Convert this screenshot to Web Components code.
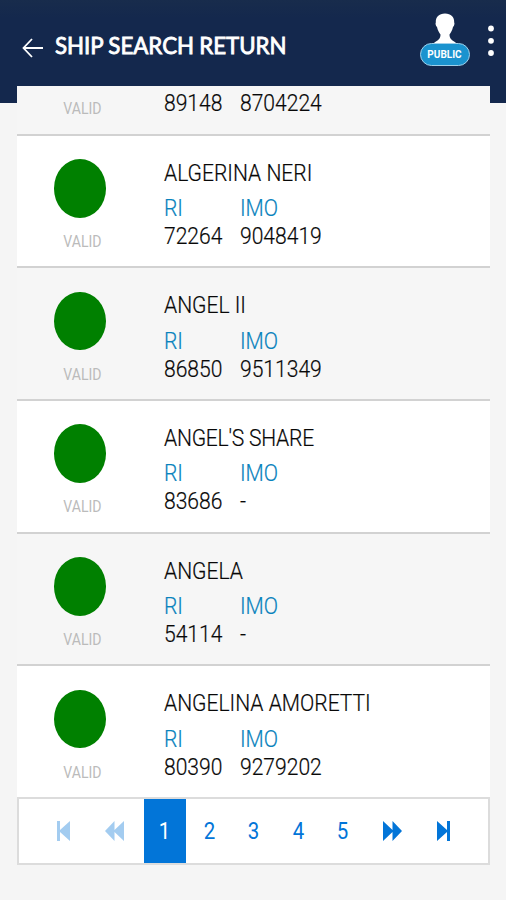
<!DOCTYPE html>
<html lang="en"><head><meta charset="utf-8"><title>Ship search return</title>
<style>html,body{margin:0;height:100%;background:#f5f5f5}body{overflow:hidden;font-family:Roboto,"Liberation Sans",sans-serif}</style></head>
<body>
<ship-app></ship-app>
<script>
const define=(name,html,setup)=>customElements.define(name,class extends HTMLElement{
  constructor(){super();this.attachShadow({mode:'open'}).innerHTML=html}
  connectedCallback(){if(setup)setup(this,this.shadowRoot)}
});

define('user-badge',`<style>
:host{display:flex;flex-direction:column;align-items:center;width:50px}
svg{display:block;width:42px;height:32px}
span{box-sizing:border-box;width:50px;height:23.500px;border:1.5px solid #9fd0ea;border-radius:12px;background:#1b93cf;color:#fff;font:700 10px/21px Roboto,sans-serif;text-align:center;margin-top:-2.500px;z-index:1}
</style><svg viewBox="0 0 42 32"><path fill="#fff" d="M21 .5C15 .5 11.500 4 11.800 9.500C11.200 10 11.600 13 13 14C13.700 17.500 15.500 20 16.500 21.500C16.500 25.500 14.500 27 10.500 29.500L8 32H34L31.500 29.500C27.500 27 25.500 25.500 25.500 21.500C26.500 20 28.300 17.500 29 14C30.400 13 30.800 10 30.200 9.500C30.500 4 27 .5 21 .5Z"/></svg><span><slot></slot></span>`);

define('app-bar',`<style>
:host{display:flex;box-sizing:border-box;height:102.500px;background:linear-gradient(#182c4c 0,#14284d 18px);padding:13px 11px 0 22px;color:#fff}
.back{width:21px;height:20px;margin-top:24.500px}
h1{margin:18px 0 0 12px;font:400 23.300px/29px Lato,sans-serif;-webkit-text-stroke:.85px #fff;word-spacing:-.5px;white-space:nowrap;transform-origin:0 50%;transform:scaleX(.956);flex:1}
.more{width:8px;height:34px;margin:10.500px 0 0 17.500px;display:block;padding:0}
</style><svg class="back" viewBox="0 0 21 20" fill="none" stroke="#fff" stroke-width="1.800"><path d="M10 1L1.500 10L10 19M1.500 10H21"/></svg><h1><slot></slot></h1><slot name="end"></slot><svg class="more" viewBox="0 0 8 34" fill="#fff"><circle cx="4" cy="4.500" r="2.900"/><circle cx="4" cy="16.800" r="2.900"/><circle cx="4" cy="29" r="2.900"/></svg>`);

define('ship-row',`<style>
:host{display:flex;box-sizing:border-box;height:132.700px;border-bottom:2px solid #d2d2d2;background:var(--row,#fff)}
.status{width:131px;display:flex;flex-direction:column;align-items:center;padding-top:23.500px;box-sizing:border-box}
i{width:52px;height:58.500px;border-radius:50%;background:#008000;position:relative;left:-3px}
.t{display:inline-block;white-space:nowrap;transform:scaleX(.89)}
.status .t{color:#bbb;font-size:15.800px;line-height:20px;font-weight:400;margin-top:14.500px}
.info{padding:22px 0 0 15.600px;font-weight:300;font-size:23.400px;color:#080808;-webkit-text-stroke:.2px currentColor}
.info .t{transform-origin:0 50%;line-height:30px}
.name{height:35.500px}
.name .t{transform:scaleX(.9)}
.grid{display:grid;grid-template-columns:76.200px 120px;grid-template-rows:28px 30px}
.grid .t{transform:scaleX(.9)}
.label{color:#0a83bd}
:host([tight]) .name{letter-spacing:-.25px}
:host([partial]){height:49.500px}
:host([partial]) .name{display:none}
:host([partial]) i{display:none}
:host([partial]) .status{padding-top:0}
:host([partial]) .status .t{margin-top:12.500px}
:host([partial]) .info{padding-top:1.500px}
</style><div class="status"><i></i><span class="t">VALID</span></div><div class="info"><div class="name"><span class="t"><slot></slot></span></div><div class="grid"></div></div>`,(el,r)=>{
  const cell=(c,s)=>`<span class="t ${c}">${s}</span>`;
  r.querySelector('.grid').innerHTML=(el.hasAttribute('partial')?'':cell('label','RI')+cell('label','IMO'))+cell('',el.getAttribute('ri'))+cell('',el.getAttribute('imo'));
});

define('page-button',`<style>
:host{display:flex;align-items:center;justify-content:center;width:44.500px;color:#0275d8;font-size:23px}
:host([active]){background:#0275d8;color:#fff;width:42px;margin-right:1px}
:host([disabled]){opacity:.36}
.n{transform:scaleX(.89)}svg{display:block;height:20px}
</style><div class="w"></div>`,(el,r)=>{
  const icons={
    first:[13,'M0 0H3V9L13 0V20L3 11V20H0Z'],
    prev:[19,'M0 10L9.500 0V9L19 0V20L9.500 11V20Z'],
    next:[19,'M19 10L9.500 0V9L0 0V20L9.500 11V20Z'],
    last:[13,'M13 0H10V9L0 0V20L10 11V20H13Z']};
  const k=el.getAttribute('icon');
  r.querySelector('.w').innerHTML=k?`<svg width="${icons[k][0]}" viewBox="0 0 ${icons[k][0]} 20" fill="currentColor"><path d="${icons[k][1]}"/></svg>`:'<div class="n"><slot></slot></div>';
});

define('page-nav',`<style>
:host{display:flex;box-sizing:border-box;height:68px;border:2px solid #dcdcdc;background:#fff;padding-left:22.500px}
.a{width:43px}.b{width:59px}.c{width:55px}.d{width:47px}
</style><page-button class="a" icon="first" disabled></page-button><page-button class="b" icon="prev" disabled></page-button><page-button active>1</page-button><page-button>2</page-button><page-button>3</page-button><page-button>4</page-button><page-button>5</page-button><page-button class="c" icon="next"></page-button><page-button class="d" icon="last"></page-button>`);

define('ship-app',`<style>
:host{display:block;width:506px;height:900px;background:#f5f5f5}
main{margin:-16.500px 16px 0 17.400px;position:relative}
ship-row:nth-child(odd){--row:#f6f6f6}
ship-row:last-of-type{height:131px;border:0}
</style><app-bar>SHIP SEARCH RETURN<user-badge slot="end">PUBLIC</user-badge></app-bar>
<main><ship-row partial ri="89148" imo="8704224"></ship-row>
<ship-row ri="72264" imo="9048419">ALGERINA NERI</ship-row>
<ship-row ri="86850" imo="9511349">ANGEL II</ship-row>
<ship-row tight ri="83686" imo="-">ANGEL'S SHARE</ship-row>
<ship-row ri="54114" imo="-">ANGELA</ship-row>
<ship-row ri="80390" imo="9279202">ANGELINA AMORETTI</ship-row>
<page-nav></page-nav></main>`);
</script></body></html>
